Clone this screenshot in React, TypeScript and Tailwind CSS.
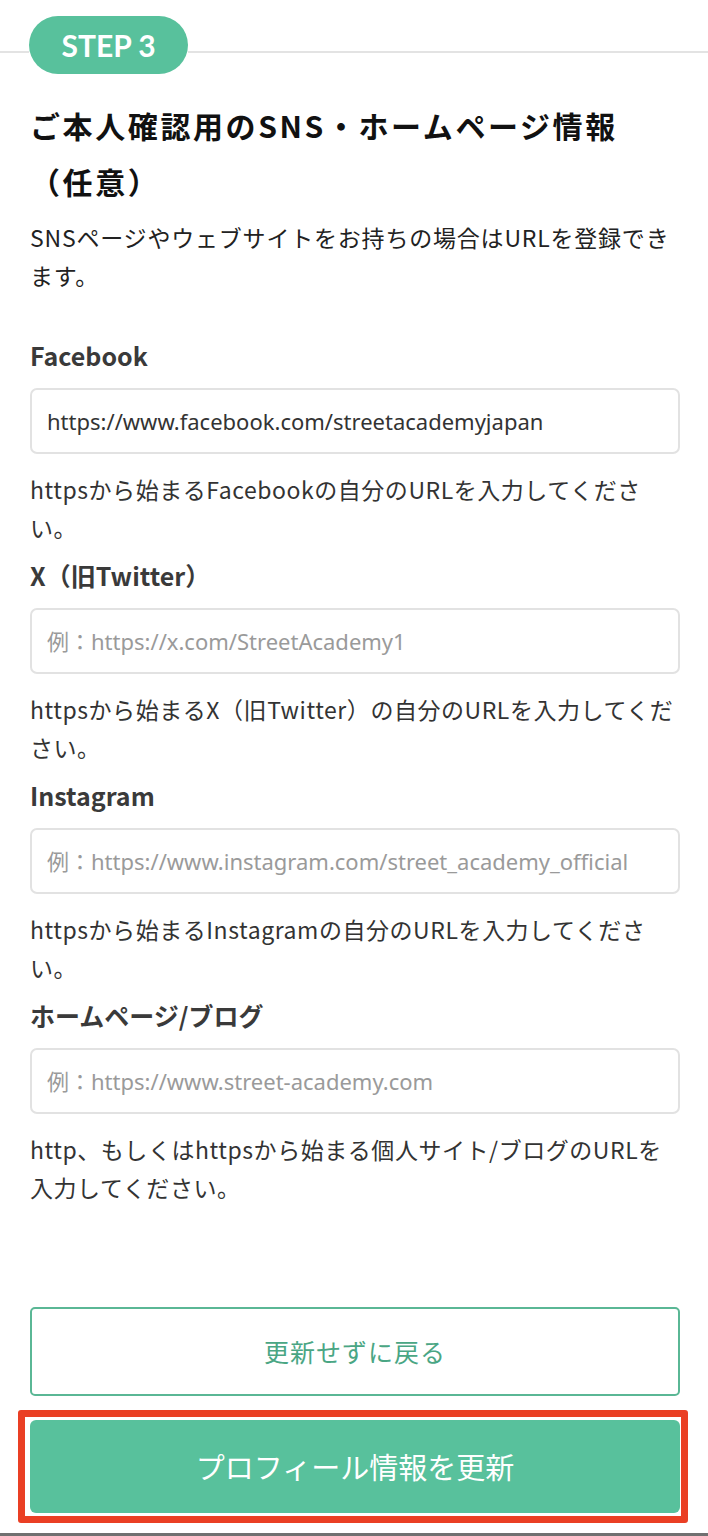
import React from 'react';

const fields = [
  {
    label: 'Facebook',
    value: 'https://www.facebook.com/streetacademyjapan',
    placeholder: '',
    help: 'httpsから始まるFacebookの自分のURLを入力してください。',
  },
  {
    label: 'X（旧Twitter）',
    value: '',
    placeholder: '例：https://x.com/StreetAcademy1',
    help: 'httpsから始まるX（旧Twitter）の自分のURLを入力してください。',
  },
  {
    label: 'Instagram',
    value: '',
    placeholder: '例：https://www.instagram.com/street_academy_official',
    help: 'httpsから始まるInstagramの自分のURLを入力してください。',
  },
  {
    label: 'ホームページ/ブログ',
    value: '',
    placeholder: '例：https://www.street-academy.com',
    help: 'http、もしくはhttpsから始まる個人サイト/ブログのURLを入力してください。',
  },
];

export default function App() {
  return (
    <div className="w-[708px] h-[1536px] bg-white flex flex-col overflow-hidden font-['Noto_Sans_CJK_JP','Noto_Sans',sans-serif] text-[#333]">
      {/* step header */}
      <div className="flex items-start pt-4">
        <div className="w-[29px] h-[2px] mt-[35px] bg-[#e3e3e3]" />
        <div className="w-[159px] h-[58px] rounded-full bg-[#58c19c] flex items-center justify-center">
          <span className="text-white text-[30px] font-bold font-['Lato','Noto_Sans',sans-serif]">STEP 3</span>
        </div>
        <div className="flex-1 h-[2px] mt-[35px] bg-[#e3e3e3]" />
      </div>

      <div className="pl-[30px] pr-[28px]">
        <h1 className="mt-[23px] text-[30px] leading-[56px] font-bold tracking-[2.6px] text-[#111]">
          ご本人確認用のSNS・ホームページ情報<span className="inline-block">（任意）</span>
        </h1>
        <p className="mt-[9px] text-[23px] leading-[38px] tracking-[0.8px] text-[#222]">
          SNSページやウェブサイトをお持ちの場合はURLを登録できます。
        </p>

        <div className="mt-[43px] flex flex-col gap-[11px]">
          {fields.map((f) => (
            <div key={f.label} className="flex flex-col">
              <label className="text-[25px] leading-[36px] font-bold text-[#3a3a3a]">{f.label}</label>
              <input
                readOnly
                value={f.value}
                placeholder={f.placeholder}
                className="mt-[15px] h-[66px] w-full rounded-[7px] border-2 border-[#e2e2e2] px-[15px] text-[22px] text-[#333] placeholder:text-[#9a9a9a] font-['Noto_Sans','Noto_Sans_CJK_JP',sans-serif] outline-none"
              />
              <p className="mt-[16px] text-[23px] leading-[38px] tracking-[0.55px] text-[#333]">{f.help}</p>
            </div>
          ))}
        </div>

        <div className="mt-[101px] flex flex-col">
          <button className="h-[89px] w-full rounded-[5px] border-2 border-[#5ab795] bg-white text-[25px] tracking-[1px] text-[#4aa684]">
            更新せずに戻る
          </button>
          <div className="relative mt-[24px]">
            <button className="h-[93px] w-full rounded-[6px] bg-[#58c19c] text-[29px] text-white">
              プロフィール情報を更新
            </button>
            <div className="absolute -left-[12px] -right-[8px] -top-[10px] -bottom-[10px] border-[7px] border-[#ea3f24] rounded-[3px] pointer-events-none" />
          </div>
        </div>
      </div>

      <div className="mt-auto h-[3px] bg-[#707070]" />
    </div>
  );
}
